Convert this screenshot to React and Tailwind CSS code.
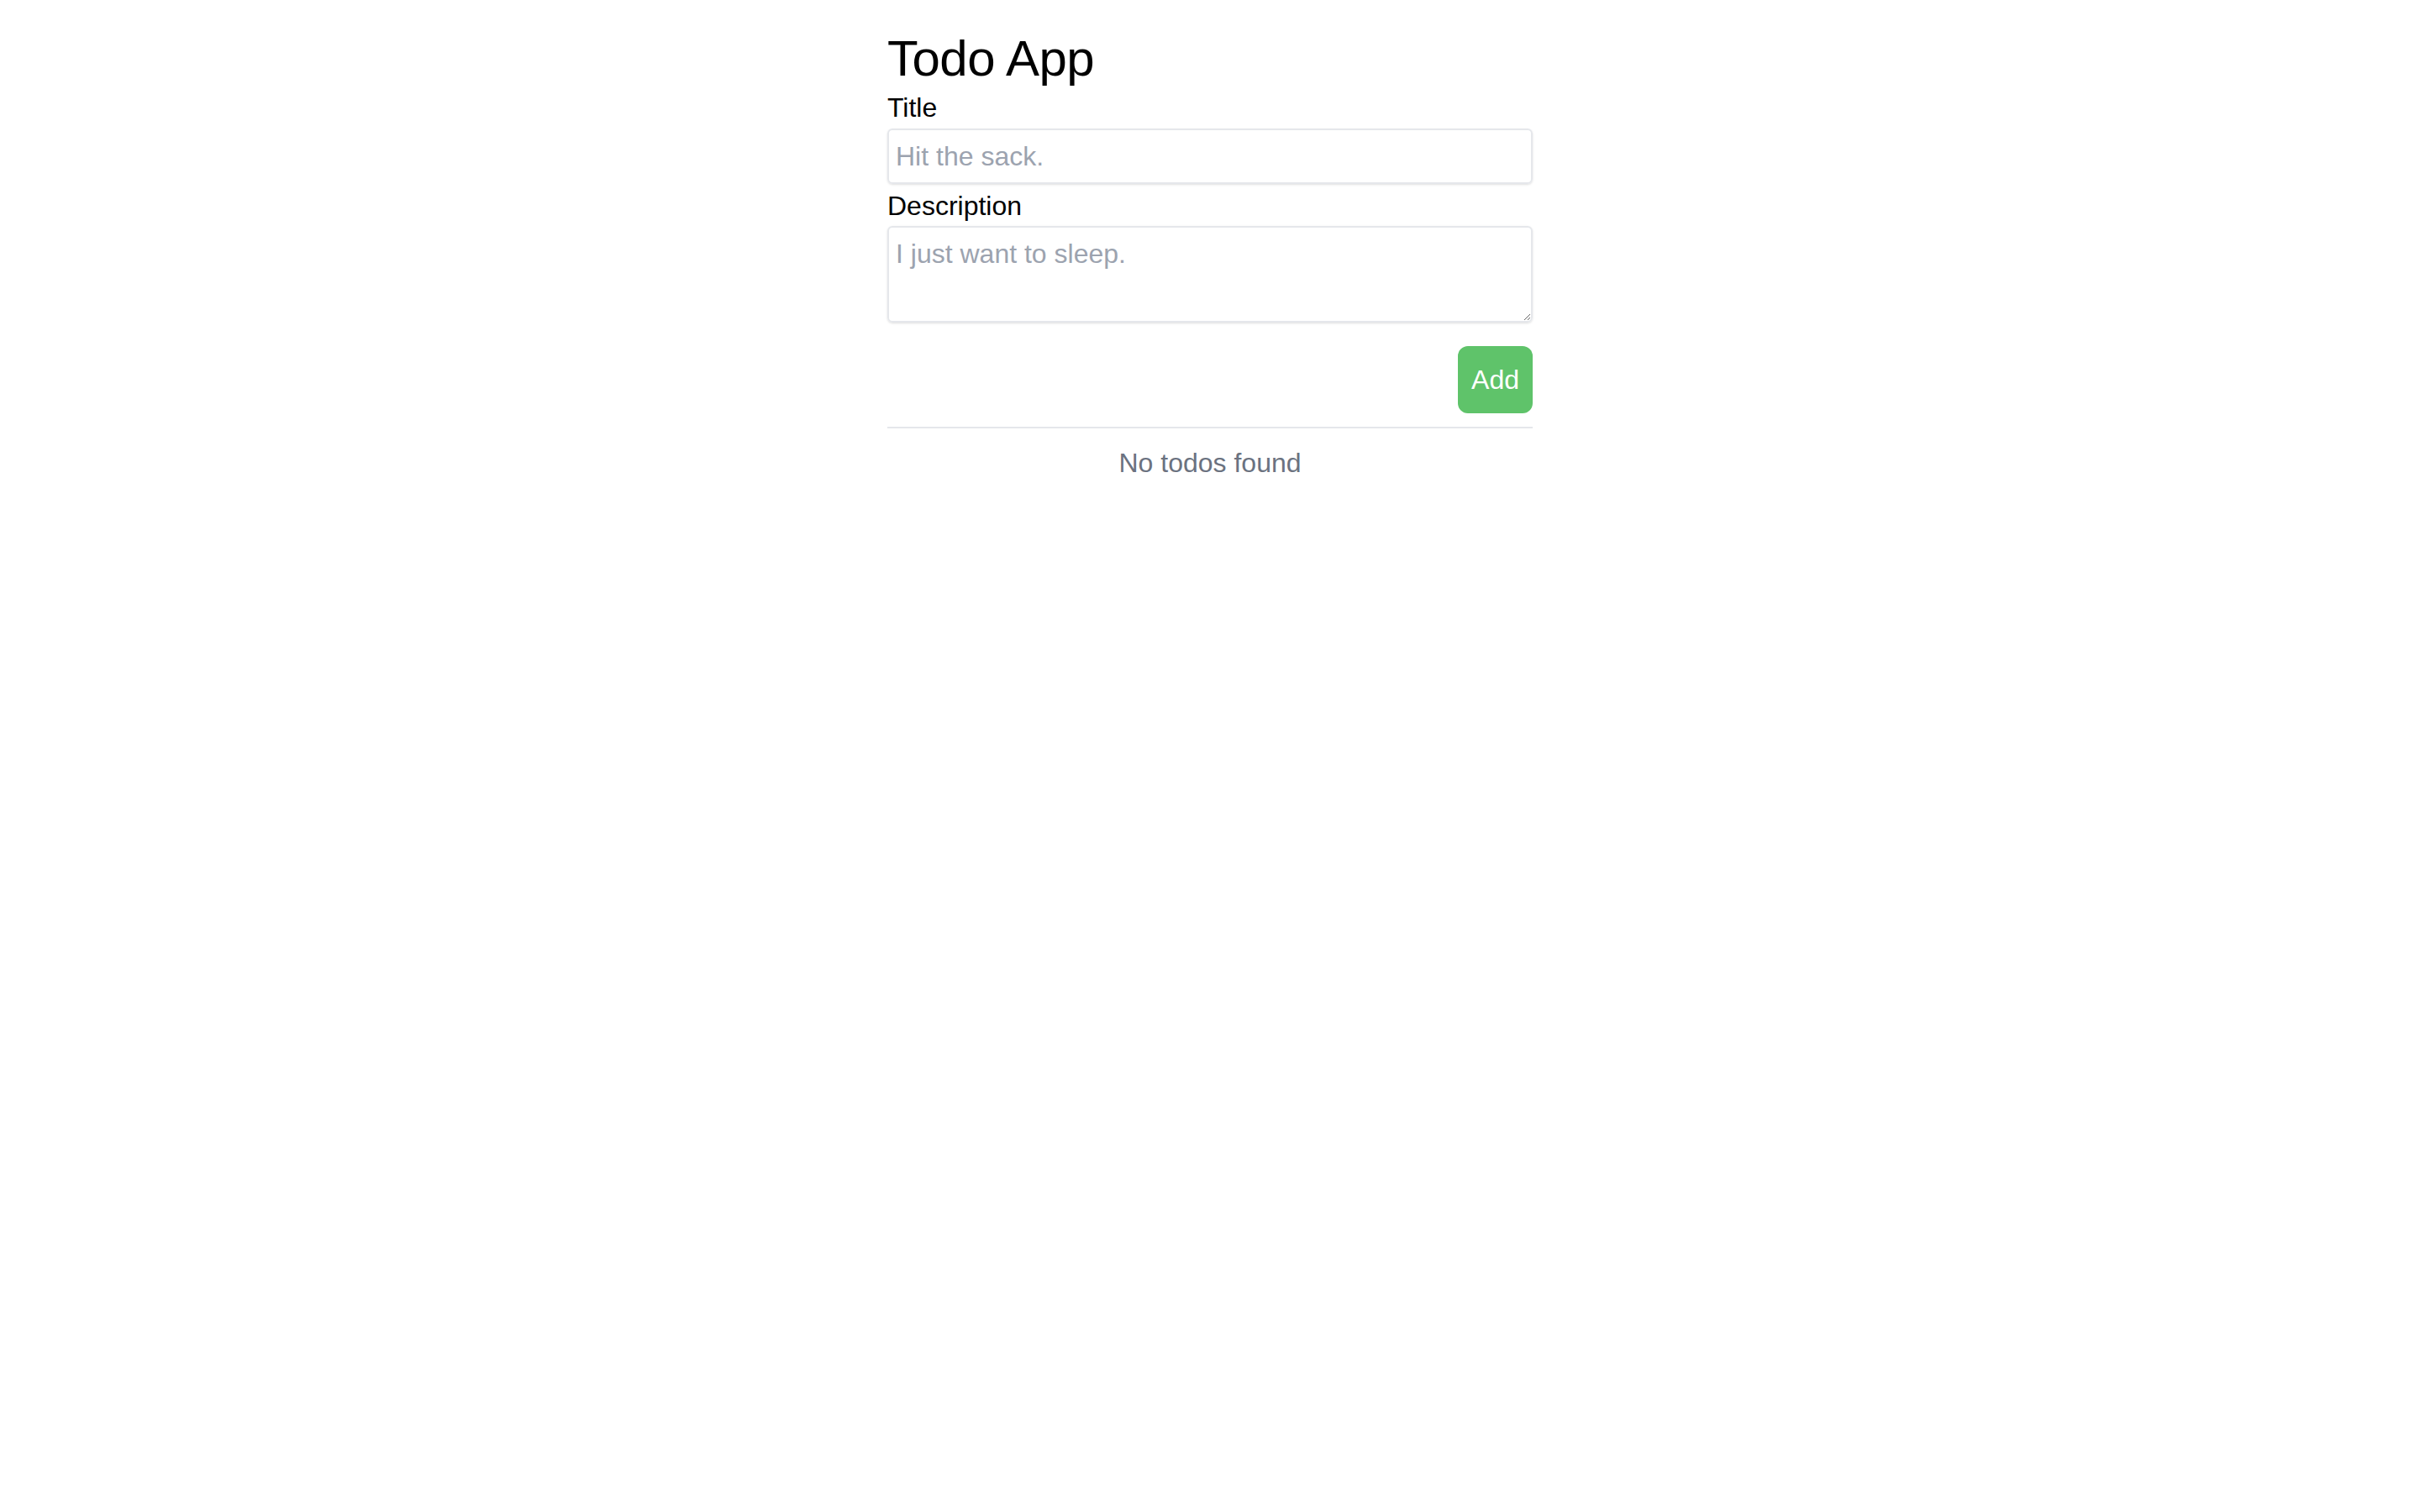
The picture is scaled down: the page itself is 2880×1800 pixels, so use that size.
import React, { useState } from 'react';

export default function App() {
  const [title, setTitle] = useState('');
  const [description, setDescription] = useState('');
  const [todos, setTodos] = useState([]);

  const addTodo = () => {
    if (!title.trim()) return;
    setTodos([...todos, { id: Date.now(), title, description }]);
    setTitle('');
    setDescription('');
  };

  return (
    <div className="min-h-screen bg-white font-['Liberation_Sans',Arial,sans-serif] text-black">
      <div className="mx-auto w-[768px] pt-[34px]">
        {/* Header */}
        <h1 className="text-[60px] leading-[72px] tracking-[-0.5px]">Todo App</h1>

        {/* Form */}
        <label className="block text-[32px] leading-[44px]">Title</label>
        <input
          type="text"
          value={title}
          onChange={e => setTitle(e.target.value)}
          placeholder="Hit the sack."
          className="mt-[3px] block h-[66px] w-full rounded-[6px] border-2 border-[#e5e7eb] px-[8px] text-[32px] shadow-sm outline-none placeholder:text-[#9ca3af]"
        />

        <label className="mt-[4px] block text-[32px] leading-[44px]">Description</label>
        <textarea
          value={description}
          onChange={e => setDescription(e.target.value)}
          placeholder="I just want to sleep."
          className="mt-[2px] block h-[115px] w-full rounded-[6px] border-2 border-[#e5e7eb] px-[8px] pt-[8px] text-[32px] leading-[46px] shadow-sm outline-none placeholder:text-[#9ca3af]"
        />

        <div className="mt-[28px] flex justify-end">
          <button
            onClick={addTodo}
            className="rounded-[12px] bg-[#5fc36a] px-[16px] py-[16px] text-[32px] leading-[48px] text-white"
          >
            Add
          </button>
        </div>

        <div className="mt-[16px] h-[2px] w-full bg-[#e5e7eb]" />

        {/* List */}
        {todos.length === 0 ? (
          <p className="mt-[19px] text-center text-[32px] leading-[44px] text-[#6b7280]">No todos found</p>
        ) : (
          <ul className="mt-[19px]">
            {todos.map(todo => (
              <li key={todo.id} className="py-2 text-[32px]">
                {todo.title}
              </li>
            ))}
          </ul>
        )}
      </div>
    </div>
  );
}
